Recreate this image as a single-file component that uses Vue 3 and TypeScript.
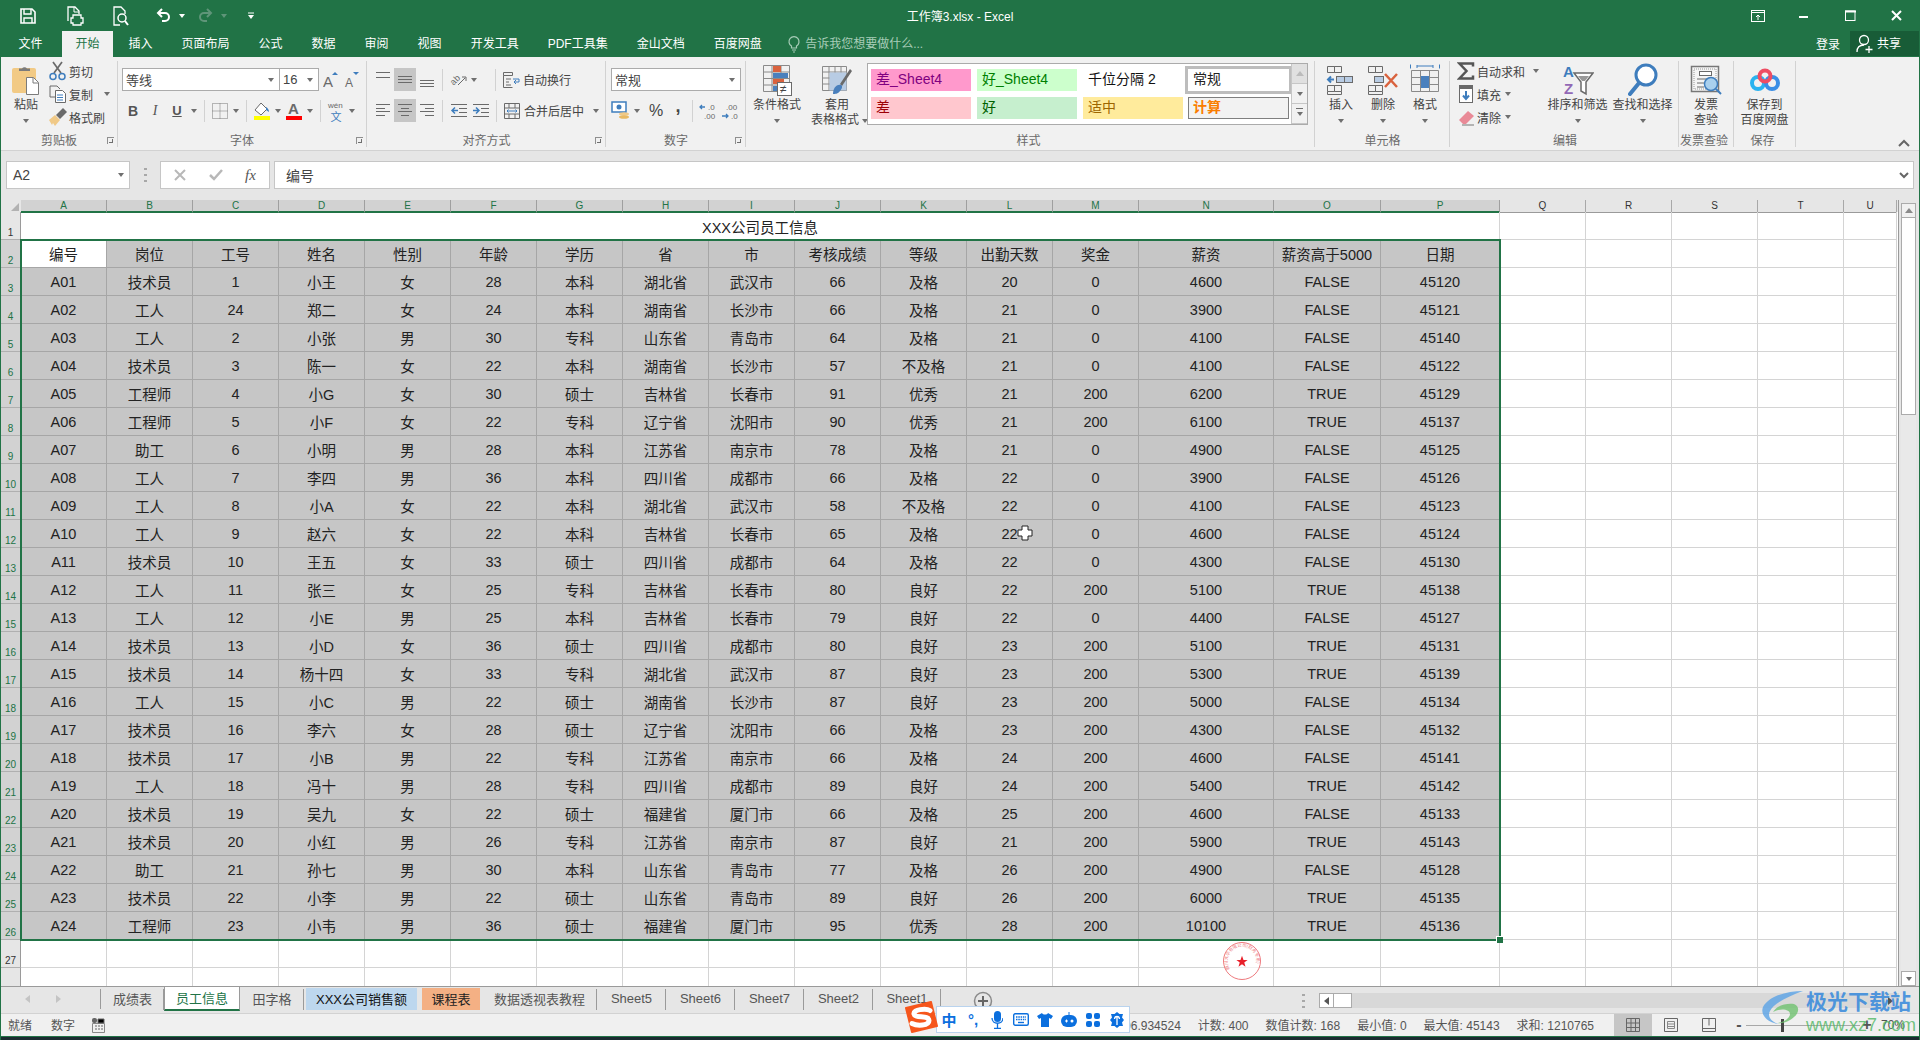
<template>
  <div class="app">
    <div class="titlebar">
      <div class="qat">
        <span class="qb q28"><Ico n="save" /></span>
        <span class="qb"><Ico n="printer" /></span>
        <span class="qb"><Ico n="preview" /></span>
        <span class="qb"><Ico n="undo" /></span><i class="tri tri-w"></i>
        <span class="qb q-redo"><Ico n="redo" /></span><i class="tri tri-dim"></i>
        <span class="qb q-more"><Ico n="more" /></span>
      </div>
      <div class="doc-title">工作簿3.xlsx - Excel</div>
      <div class="winbtns">
        <span class="wb"><Ico n="winopt" /></span>
        <span class="wb"><Ico n="winmin" /></span>
        <span class="wb"><Ico n="winmax" /></span>
        <span class="wb"><Ico n="winclose" /></span>
      </div>
    </div>

    <div class="tabrow">
      <span
        v-for="t in ribbonTabs"
        :key="t"
        class="rtab"
        :class="{ active: t === '开始', file: t === '文件' }"
      >{{ t }}</span>
      <span class="tellme"><Ico n="bulb" /><span>告诉我您想要做什么...</span></span>
      <span class="login">登录</span>
      <span class="share"><Ico n="person" /><span>共享</span></span>
    </div>

    <div class="ribbon">
      <section class="group g-clip">
        <div class="body row-body">
          <div class="big paste">
            <span class="big-ico"><Ico n="paste" /></span>
            <span>粘贴</span>
            <i class="tri big-tri"></i>
          </div>
          <div class="three clip-col">
            <div class="line"><span class="ic"><Ico n="cut" /></span>剪切</div>
            <div class="line"><span class="ic"><Ico n="copy" /></span>复制<i class="tri tri-copy"></i></div>
            <div class="line"><span class="ic"><Ico n="brush" /></span>格式刷</div>
          </div>
        </div>
        <div class="glabel">剪贴板<i class="launcher"></i></div>
      </section>

      <section class="group g-font">
        <div class="body two">
          <div class="line">
            <div class="combo font-name"><span>等线</span><i class="tri"></i></div>
            <div class="combo font-size"><span>16</span><i class="tri"></i></div>
            <span class="grow-a"><Ico n="growA" /></span>
            <span class="shrink-a"><Ico n="shrinkA" /></span>
          </div>
          <div class="line">
            <span class="ic bi b">B</span>
            <span class="ic bi i">I</span>
            <span class="ic bi u">U</span>
            <span class="cr"><i class="tri"></i></span>
            <i class="sep"></i>
            <span class="ic"><Ico n="borders" /></span>
            <span class="cr"><i class="tri"></i></span>
            <i class="sep"></i>
            <span class="ic"><Ico n="bucket" /></span>
            <span class="cr"><i class="tri"></i></span>
            <span class="ic"><Ico n="fontcolor" /></span>
            <span class="cr"><i class="tri"></i></span>
            <i class="sep"></i>
            <span class="ic"><Ico n="wen" /></span>
            <span class="cr"><i class="tri"></i></span>
          </div>
        </div>
        <div class="glabel">字体<i class="launcher"></i></div>
      </section>

      <section class="group g-align">
        <div class="body two">
          <div class="line">
            <span class="al"><Ico n="alTop" /></span>
            <span class="al on"><Ico n="alMid" /></span>
            <span class="al"><Ico n="alBot" /></span>
            <i class="sep"></i>
            <span class="ic"><Ico n="orient" /></span>
            <span class="cr"><i class="tri"></i></span>
            <i class="sep sep-far"></i>
            <span class="ic"><Ico n="wrap" /></span>
            <span class="lbl">自动换行</span>
          </div>
          <div class="line">
            <span class="al"><Ico n="alLeft" /></span>
            <span class="al on"><Ico n="alCenter" /></span>
            <span class="al"><Ico n="alRight" /></span>
            <i class="sep"></i>
            <span class="ic ic22"><Ico n="outdent" /></span>
            <span class="ic ic22"><Ico n="indent" /></span>
            <i class="sep"></i>
            <span class="ic"><Ico n="merge" /></span>
            <span class="lbl">合并后居中</span>
            <span class="cr merge-cr"><i class="tri"></i></span>
          </div>
        </div>
        <div class="glabel">对齐方式<i class="launcher"></i></div>
      </section>

      <section class="group g-num">
        <div class="body two">
          <div class="line">
            <div class="combo num-fmt"><span>常规</span><i class="tri"></i></div>
          </div>
          <div class="line">
            <span class="ic"><Ico n="money" /></span>
            <span class="cr"><i class="tri"></i></span>
            <span class="ic pct">%</span>
            <span class="ic comma">,</span>
            <i class="sep"></i>
            <span class="ic"><Ico n="decUp" /></span>
            <span class="ic dec2"><Ico n="decDown" /></span>
          </div>
        </div>
        <div class="glabel">数字<i class="launcher"></i></div>
      </section>

      <section class="group g-style">
        <div class="body row-body">
          <div class="big w60">
            <span class="big-ico"><Ico n="cond" /></span>
            <span>条件格式</span>
            <i class="tri big-tri"></i>
          </div>
          <div class="big w60">
            <span class="big-ico"><Ico n="tablefmt" /></span>
            <span>套用</span>
            <span class="with-tri">表格格式<i class="tri"></i></span>
          </div>
          <div class="gallery">
            <div class="gal-cells">
              <span class="gc c-bad4">差_Sheet4</span>
              <span class="gc c-good4">好_Sheet4</span>
              <span class="gc c-comma">千位分隔 2</span>
              <span class="gc c-normal">常规</span>
              <span class="gc c-bad">差</span>
              <span class="gc c-good">好</span>
              <span class="gc c-mid">适中</span>
              <span class="gc c-calc">计算</span>
            </div>
            <div class="gal-scroll">
              <span class="dis"><i class="tri-up"></i></span>
              <span><i class="tri"></i></span>
              <span><i class="tri tri-bar"></i></span>
            </div>
          </div>
        </div>
        <div class="glabel">样式</div>
      </section>

      <section class="group g-cells">
        <div class="body row-body">
          <div class="big w42">
            <span class="big-ico"><Ico n="insert" /></span>
            <span>插入</span>
            <i class="tri big-tri"></i>
          </div>
          <div class="big w42">
            <span class="big-ico"><Ico n="remove" /></span>
            <span>删除</span>
            <i class="tri big-tri"></i>
          </div>
          <div class="big w42">
            <span class="big-ico"><Ico n="format" /></span>
            <span>格式</span>
            <i class="tri big-tri"></i>
          </div>
        </div>
        <div class="glabel">单元格</div>
      </section>

      <section class="group g-edit">
        <div class="body row-body">
          <div class="three edit-col">
            <div class="line"><span class="ic"><Ico n="sigma" /></span>自动求和<i class="tri tri-sum"></i></div>
            <div class="line"><span class="ic"><Ico n="filldown" /></span>填充<i class="tri tri-near"></i></div>
            <div class="line"><span class="ic"><Ico n="eraser" /></span>清除<i class="tri tri-near"></i></div>
          </div>
          <div class="big w65">
            <span class="big-ico"><Ico n="sort" /></span>
            <span>排序和筛选</span>
            <i class="tri big-tri"></i>
          </div>
          <div class="big w65">
            <span class="big-ico"><Ico n="find" /></span>
            <span>查找和选择</span>
            <i class="tri big-tri"></i>
          </div>
        </div>
        <div class="glabel">编辑</div>
      </section>

      <section class="group g-inv">
        <div class="body row-body">
          <div class="big w54">
            <span class="big-ico"><Ico n="invoice" /></span>
            <span>发票</span>
            <span>查验</span>
          </div>
        </div>
        <div class="glabel">发票查验</div>
      </section>

      <section class="group g-save">
        <div class="body row-body">
          <div class="big w61">
            <span class="big-ico"><Ico n="baidu" /></span>
            <span>保存到</span>
            <span>百度网盘</span>
          </div>
        </div>
        <div class="glabel">保存</div>
      </section>

      <div class="collapse"><Ico n="chevUp" /></div>
    </div>

    <div class="formula">
      <div class="namebox"><span>A2</span><i class="tri"></i></div>
      <div class="fdots"><Ico n="dots" /></div>
      <div class="fbtns">
        <Ico n="fxCancel" />
        <Ico n="fxOk" />
        <span class="fx">fx</span>
      </div>
      <div class="finput"><span>编号</span><Ico n="chevDown" /></div>
    </div>

    <div class="sheet-wrap">
      <div class="sheet">
        <div class="srow head-row">
          <div class="corner"><Ico n="corner" /></div>
          <div v-for="(c, i) in columns" :key="c" class="chead" :class="{ sel: i < 16 }">{{ c }}</div>
        </div>

        <div class="srow h28">
          <div class="rhead">1</div>
          <div class="title-cell">XXX公司员工信息</div>
          <div v-for="c in 5" :key="c" class="cell"></div>
        </div>

        <div v-for="(r, ri) in rows" :key="ri" class="srow h28">
          <div class="rhead sel">{{ ri + 2 }}</div>
          <div
            v-for="(v, ci) in r"
            :key="ci"
            class="cell data"
            :class="{ active: ri === 0 && ci === 0 }"
          >{{ v }}</div>
          <div v-for="c in 5" :key="c" class="cell"></div>
        </div>

        <div class="srow h28">
          <div class="rhead">27</div>
          <div v-for="c in columns" :key="c" class="cell"></div>
        </div>
        <div class="srow h28">
          <div class="rhead"></div>
          <div v-for="c in columns" :key="c" class="cell"></div>
        </div>

        <div class="selection"><i class="handle"></i></div>
        <div class="cursor"><Ico n="cursor" /></div>
        <div class="stamp"><Ico n="stamp" /></div>
      </div>

      <div class="vscroll">
        <span class="vbtn up"><i class="tri-up"></i></span>
        <span class="vthumb"></span>
        <span class="vtrack"></span>
        <span class="vbtn"><i class="tri"></i></span>
      </div>
    </div>

    <div class="tabbar">
      <div class="tabnav"><i class="nav-l"></i><i class="nav-r"></i></div>
      <span
        v-for="t in sheetTabs"
        :key="t.name"
        class="stab"
        :class="t.cls"
        :style="{ width: t.w + 'px' }"
      >{{ t.name }}</span>
      <span class="addsheet"><Ico n="plus" /></span>
      <span class="hdots"><Ico n="dots" /></span>
      <div class="hscroll">
        <span class="hbtn"><i class="nav-l dark"></i></span>
        <span class="hthumb"></span>
        <span class="htrack"><i class="nav-r dark"></i></span>
      </div>
    </div>

    <div class="statusbar">
      <span class="st-left">就绪</span>
      <span class="st-left">数字</span>
      <span class="macro"><Ico n="macro" /></span>
      <div class="st-fill"></div>
      <span v-for="s in stats" :key="s" class="stat">{{ s }}</span>
      <div class="views">
        <span class="vw on"><Ico n="vNormal" /></span>
        <span class="vw"><Ico n="vPage" /></span>
        <span class="vw"><Ico n="vBreak" /></span>
      </div>
      <div class="zoomer">
        <span class="zm">-</span>
        <span class="slider"><i></i></span>
        <span class="zm">+</span>
        <span class="zpct">70%</span>
      </div>
    </div>
    <div class="taskbar"></div>

    <div class="ime">
      <div class="ime-logo"><Ico n="sogou" /></div>
      <div class="ime-bar">
        <span class="ime-zh">中</span>
        <span class="ime-punc">°,</span>
        <span class="ime-i"><Ico n="mic" /></span>
        <span class="ime-i"><Ico n="kbd" /></span>
        <span class="ime-i"><Ico n="shirt" /></span>
        <span class="ime-i"><Ico n="robot" /></span>
        <span class="ime-i"><Ico n="apps" /></span>
        <span class="ime-i"><Ico n="gear" /></span>
      </div>
    </div>

    <div class="watermark">
      <Ico n="swirl" />
      <div class="wm-text">
        <span class="wm-cn">极光下载站</span>
        <span class="wm-url">www.xz7.com</span>
      </div>
    </div>
  </div>
</template>

<script setup lang="ts">
import { h } from 'vue'

const G = '#6a6a6a'
const B = '#3e7dbd'
const L = 'fill="none" stroke="#6a6a6a"'

// [width, height, svg markup]
const icons: Record<string, [number, number, string]> = {
  save: [18, 18, '<path d="M2 2h11l3 3v11H2z" fill="none" stroke="#fff" stroke-width="1.6"/><path d="M5 2v5h7V2M5 16v-5h8v5" fill="none" stroke="#fff" stroke-width="1.4"/>'],
  printer: [18, 20, '<path d="M2 15V1h7l4 4v3" fill="none" stroke="#fff" stroke-width="1.3"/><path d="M8 1v5h5" fill="none" stroke="#fff"/><path d="M7 9h8v3h2v5h-2v2H7v-2H5v-5h2z" fill="none" stroke="#fff" stroke-width="1.3"/>'],
  preview: [18, 20, '<path d="M8 19H2V1h7l4 4v3" fill="none" stroke="#fff" stroke-width="1.3"/><circle cx="10" cy="12" r="4" fill="none" stroke="#fff" stroke-width="1.5"/><path d="M13 15l3 4" stroke="#fff" stroke-width="2"/>'],
  undo: [16, 16, '<path d="M4 5h6a4 4 0 0 1 0 8H7" fill="none" stroke="#fff" stroke-width="2"/><path d="M7 1L3 5l4 4" fill="none" stroke="#fff" stroke-width="2"/>'],
  redo: [16, 16, '<path d="M12 5H6a4 4 0 0 0 0 8h3" fill="none" stroke="#5f9579" stroke-width="2"/><path d="M9 1l4 4-4 4" fill="none" stroke="#5f9579" stroke-width="2"/>'],
  more: [8, 8, '<path d="M1 1h6" stroke="#fff"/><path d="M1 3h6L4 7z" fill="#fff"/>'],
  winopt: [14, 12, '<rect x=".5" y=".5" width="13" height="11" fill="none" stroke="#fff"/><path d="M1 2.5h12" stroke="#fff"/><path d="M7 10V5M5 7l2-2 2 2" fill="none" stroke="#fff"/>'],
  winmin: [10, 10, '<path d="M0 6h9" stroke="#fff" stroke-width="2"/>'],
  winmax: [11, 11, '<rect x=".5" y="1" width="9.5" height="9.5" fill="none" stroke="#fff"/><path d="M0 1.5h11" stroke="#fff" stroke-width="2"/>'],
  winclose: [11, 11, '<path d="M1 1l9 9M10 1l-9 9" stroke="#fff" stroke-width="2"/>'],
  bulb: [12, 18, '<path d="M3.5 11a5 5 0 1 1 5 0v2h-5z" fill="none" stroke="#a8cdb8" stroke-width="1.2"/><path d="M4 15h4M5 17h2" stroke="#a8cdb8"/>'],
  person: [18, 20, '<circle cx="8" cy="6" r="4.5" fill="none" stroke="#fff" stroke-width="1.3"/><path d="M1 18c0-5 3-7 7-7" fill="none" stroke="#fff" stroke-width="1.3"/><path d="M13 12v7M9.5 15.5h7" stroke="#fff" stroke-width="1.3"/>'],
  paste: [28, 30, '<rect x="0" y="3" width="24" height="25" rx="2" fill="#f2ca85"/><path d="M7 6V3.5h3a3 3 0 0 1 5 0h3V6z" fill="#7b7b7b"/><path d="M14.5 12.5h7l5 5v12h-12z" fill="#fff" stroke="#7b7b7b"/><path d="M21 13v5h5" fill="none" stroke="#7b7b7b"/>'],
  cut: [20, 20, `<path d="M6 12L14 1M13 12L5 1" stroke="${G}" stroke-width="1.7"/><circle cx="5" cy="15.5" r="3" fill="none" stroke="${B}" stroke-width="1.5"/><circle cx="14" cy="15.5" r="3" fill="none" stroke="${B}" stroke-width="1.5"/>`],
  copy: [18, 18, `<path d="M6 12H1V1h7l3 3" ${L}/><path d="M6.5 5.5h7l3 3v9h-10z" fill="#fff" stroke="${G}"/><path d="M8 10h6M8 12.5h6M8 15h6" stroke="${B}"/>`],
  brush: [20, 20, `<path d="M1 13l6-5 5 5-5 6-2-3-1 2z" fill="#f0c987"/><path d="M8 8l7-7 4 4-7 7z" fill="${G}"/>`],
  growA: [16, 18, `<text x="0" y="16" font-size="15" fill="${G}" font-family="Liberation Sans">A</text><path d="M9 4l3-3 3 3z" fill="${B}"/>`],
  shrinkA: [16, 18, `<text x="1" y="16" font-size="12" fill="${G}" font-family="Liberation Sans">A</text><path d="M9 1h6l-3 3z" fill="${B}"/>`],
  borders: [16, 16, '<path d="M.5.5h15v15H.5zM8 .5v15M.5 8h15" fill="none" stroke="#777" stroke-dasharray="1 1"/>'],
  bucket: [18, 20, `<path d="M2 9l6-7 6 6-6 6z" fill="#fff" stroke="${G}"/><path d="M13 6c2 1 3 3 3 5l-3-2z" fill="${B}"/><rect x="1" y="15" width="16" height="4" fill="#ffff00"/>`],
  fontcolor: [16, 20, `<text x="2" y="13" font-size="15" font-weight="700" fill="${G}" font-family="Liberation Sans">A</text><rect x="0" y="15" width="16" height="4" fill="#ff0000"/>`],
  wen: [18, 22, `<text x="1" y="8" font-size="8" fill="${G}" font-family="Liberation Sans">wén</text><text x="3.5" y="20.5" font-size="11" fill="${B}" font-family="Noto Sans CJK SC">文</text>`],
  alTop: [16, 23, `<path d="M1 4.5h14M1 9.5h14" ${L}/>`],
  alMid: [16, 23, `<path d="M1 8.5h14M1 11.5h14M1 14.5h14" ${L}/>`],
  alBot: [16, 23, `<path d="M1 12.5h14M1 15.5h14M1 18.5h14" ${L}/>`],
  alLeft: [16, 23, `<path d="M1 5.5h14M1 9.5h9M1 12.5h14M1 16.5h9" ${L}/>`],
  alCenter: [16, 23, `<path d="M1 5.5h14M4 9.5h8M1 12.5h14M4 16.5h8" ${L}/>`],
  alRight: [16, 23, `<path d="M1 5.5h14M6 9.5h9M1 12.5h14M6 16.5h9" ${L}/>`],
  orient: [18, 18, `<text x="1" y="12" font-size="9" transform="rotate(-45 6 9)" fill="${G}" font-family="Liberation Sans">ab</text><path d="M9 14L16 7M13 6h4v4" ${L}/>`],
  wrap: [18, 18, `<path d="M1.5 1.5h9v3h-9zM1.5 4.5v12h9M4 8h5M4 11h3M4 14h5" ${L}/><path d="M11 8h6M17 8v3h-5M14 9l-2 2 2 2" fill="none" stroke="${B}"/>`],
  merge: [18, 18, `<path d="M1.5 1.5h15v15h-15zM1.5 6h15M1.5 12h15M6 1.5V6M12 1.5V6M6 12v4.5M12 12v4.5" ${L}/><path d="M4 9h10M5.5 7.5L4 9l1.5 1.5M12.5 7.5L14 9l-1.5 1.5" fill="none" stroke="${B}"/>`],
  outdent: [18, 16, `<path d="M1 1.5h16M9 5.5h8M9 9.5h8M1 13.5h16" ${L}/><path d="M8 7.5H2M5 4.5l-3 3 3 3" fill="none" stroke="${B}" stroke-width="1.5"/>`],
  indent: [18, 16, `<path d="M1 1.5h16M9 5.5h8M9 9.5h8M1 13.5h16" ${L}/><path d="M1 7.5h6M4 4.5l3 3-3 3" fill="none" stroke="${B}" stroke-width="1.5"/>`],
  money: [20, 20, `<rect x="1" y="1" width="14" height="10" fill="#fff" stroke="${B}" stroke-width="1.5"/><circle cx="8" cy="6" r="2.5" fill="${B}"/><ellipse cx="13" cy="13" rx="5" ry="1.8" fill="#f0c987"/><ellipse cx="13" cy="16" rx="5" ry="1.8" fill="#e8b964"/>`],
  decUp: [20, 18, `<path d="M7 5H2M4 3L2 5l2 2" fill="none" stroke="${B}" stroke-width="1.3"/><text x="10" y="8" font-size="8" fill="${G}" font-family="Liberation Sans">.0</text><text x="6" y="17" font-size="8" fill="${G}" font-family="Liberation Sans">.00</text>`],
  decDown: [20, 18, `<text x="6" y="8" font-size="8" fill="${G}" font-family="Liberation Sans">.00</text><path d="M2 14h6M6 12l2 2-2 2" fill="none" stroke="${B}" stroke-width="1.3"/><text x="11" y="17" font-size="8" fill="${G}" font-family="Liberation Sans">.0</text>`],
  cond: [30, 32, '<path d="M1.5 1.5h26v26h-26zM10 1.5v26M19 1.5v26M1.5 8h26M1.5 14.5h26M1.5 21h26" fill="none" stroke="#8a8a8a"/><rect x="11" y="2" width="8" height="6" fill="#d9623e"/><rect x="11" y="9" width="15" height="5" fill="#4a80bd"/><rect x="11" y="15" width="11" height="5" fill="#d9623e"/><rect x="11" y="22" width="6" height="5" fill="#4a80bd"/><rect x="15.5" y="18.5" width="14" height="13" fill="#fff" stroke="#6a6a6a"/><text x="18" y="29" font-size="12" fill="#444" font-family="Liberation Sans">≠</text>'],
  tablefmt: [32, 32, '<path d="M1.5 2.5h24v24h-24zM1.5 8h24M1.5 14h24M1.5 20h24M8 2.5v24M14 2.5v24M20 2.5v24" fill="none" stroke="#8a8a8a"/><rect x="8.5" y="8.5" width="17" height="18" fill="#b8cce4"/><path d="M19 20L29 5l2 2-10 15z" fill="#6a6a6a"/><path d="M12 30c0-5 3-10 8-9 2 1 1 4-1 6-2 3-5 3-7 3z" fill="#4a80bd"/>'],
  insert: [30, 30, `<path d="M1.5 1.5h7v6h-7zM8.5 1.5h7v6h-7zM1.5 20.5h7v6h-7zM8.5 20.5h7v6h-7zM1.5 26.5v3h14v-3" fill="none" stroke="#6a6a6a"/><rect x="10.5" y="11.5" width="8" height="6" fill="#b8cce4" stroke="#6a6a6a"/><rect x="18.5" y="11.5" width="8" height="6" fill="#b8cce4" stroke="#6a6a6a"/><path d="M8 14.5H2M5 11.5l-3 3 3 3" fill="none" stroke="${B}" stroke-width="2"/>`],
  remove: [32, 30, `<path d="M1.5 1.5h7v6h-7zM8.5 1.5h7v6h-7zM1.5 20.5h7v6h-7zM8.5 20.5h7v6h-7zM1.5 26.5v3h14v-3" fill="none" stroke="#6a6a6a"/><rect x="7.5" y="11.5" width="9" height="6" fill="#b8cce4" stroke="#6a6a6a"/><path d="M18 9l12 13M30 9L18 22" stroke="#d9623e" stroke-width="2.5"/>`],
  format: [30, 32, `<path d="M7 2h16M7 1v3M23 1v3" fill="none" stroke="${B}"/><path d="M.5.5v4M29.5.5v4" stroke="${B}"/><path d="M1.5 6.5h27v21h-27zM1.5 13.5h27M1.5 20.5h27M10.5 6.5v21M19.5 6.5v21" fill="none" stroke="#8a8a8a"/><rect x="11" y="12" width="8" height="12" fill="#4a80bd"/>`],
  sigma: [18, 18, '<path d="M16 4.5V1.5H2.5l7 7.5-7 7.5H16v-3" fill="none" stroke="#555" stroke-width="2.5"/>'],
  filldown: [14, 18, `<rect x=".5" y=".5" width="13" height="17" fill="#fff" stroke="${G}"/><rect x="0" y="0" width="14" height="4" fill="${G}"/><path d="M7 6v8M4 10.5L7 14l3-3.5" fill="none" stroke="${B}" stroke-width="2"/>`],
  eraser: [18, 18, '<path d="M2 12l9-9 6 5-8 8H6z" fill="#e98a97"/><path d="M5 17h12" stroke="#777"/>'],
  sort: [32, 32, `<text x="1" y="13" font-size="15" font-weight="700" fill="${B}" font-family="Liberation Sans">A</text><text x="2" y="30" font-size="15" font-weight="700" fill="#9268b5" font-family="Liberation Sans">Z</text><path d="M12 9h19l-7 9v12l-5-3v-9z" fill="#fff" stroke="${G}" stroke-width="1.5"/><path d="M16 12h11l-4 5h-3z" fill="#999"/>`],
  find: [30, 34, `<circle cx="18" cy="12" r="10" fill="#fff" stroke="${B}" stroke-width="3"/><path d="M11 20L2 31" stroke="${B}" stroke-width="4" stroke-linecap="round"/>`],
  invoice: [32, 30, `<path d="M1.5 1.5h27v25h-27z" fill="#f5f5f5" stroke="#777" stroke-width="1.5"/><path d="M4 4h22v20H4z" fill="none" stroke="#999" stroke-dasharray="1 1"/><rect x="9.5" y="6.5" width="12" height="4" fill="#fff" stroke="${G}"/><path d="M7 14h10M7 18h7M7 22h7" ${L}/><circle cx="21" cy="19" r="6.5" fill="#a9d0ee" stroke="${B}" stroke-width="1.5"/><path d="M26 24l5 5" stroke="${B}" stroke-width="2"/>`],
  baidu: [30, 24, '<circle cx="8" cy="15" r="6" fill="none" stroke="#2ab3f0" stroke-width="4"/><circle cx="22" cy="15" r="6" fill="none" stroke="#3a8ee6" stroke-width="4"/><circle cx="15" cy="8" r="5.5" fill="none" stroke="#ee4d63" stroke-width="4"/>'],
  chevUp: [12, 8, '<path d="M1 7l5-5 5 5" fill="none" stroke="#666" stroke-width="2"/>'],
  chevDown: [10, 7, '<path d="M1 1l4 4 4-4" fill="none" stroke="#666" stroke-width="2"/>'],
  dots: [3, 14, '<path d="M0 1h3M0 7h3M0 13h3" stroke="#a8a8a8" stroke-width="2"/>'],
  fxCancel: [12, 12, '<path d="M1 1l10 10M11 1L1 11" stroke="#b8b8b8" stroke-width="2"/>'],
  fxOk: [14, 12, '<path d="M1 6l4 4 8-9" fill="none" stroke="#b8b8b8" stroke-width="2.5"/>'],
  corner: [8, 8, '<path d="M8 0v8H0z" fill="#b2b2b2"/>'],
  cursor: [16, 16, '<path d="M5 1h6v4h4v6h-4v4H5v-4H1V5h4z" fill="#fff" stroke="#222"/>'],
  stamp: [40, 40, '<defs><path id="stamp-arc" d="M8 28a14.4 14.4 0 1 1 24 0"/></defs><circle cx="20" cy="20" r="18.5" fill="#fff" fill-opacity=".6" stroke="#ee7a7e" stroke-width="1"/><text font-size="4.4" fill="#ee7a7e" font-family="Noto Sans CJK SC"><textPath href="#stamp-arc">四川大华有限公司(财务专用)</textPath></text><path transform="translate(5 5) scale(.75)" d="M20 13l2 5.5h5.5l-4.500 3.500 1.700 5.500-4.700-3.300-4.700 3.300 1.700-5.500-4.500-3.500H18z" fill="#e8202a"/>'],
  plus: [20, 20, '<circle cx="10" cy="10" r="8.5" fill="none" stroke="#8a8a8a" stroke-width="1.5"/><path d="M10 5v10M5 10h10" stroke="#666" stroke-width="2"/>'],
  macro: [13, 15, '<rect x="0" y="0" width="5" height="5" rx="2" fill="#666"/><path d="M.5 5.5h12v9H.5z" fill="none" stroke="#888"/><path d="M6 1h6v4H6zM3 8h2M6 8h2M9 8h2M3 11h2M6 11h2M9 11h2" stroke="#666"/>'],
  vNormal: [14, 14, '<path d="M.5.5h13v13H.5zM5 .5v13M9.5.5v13M.5 5h13M.5 9.5h13" fill="none" stroke="#666"/>'],
  vPage: [14, 14, '<path d="M.5.5h13v13H.5z" fill="none" stroke="#666"/><path d="M3.5 3.5h7v7h-7zM3.5 6h7M3.5 8.5h7" fill="none" stroke="#888"/>'],
  vBreak: [14, 14, '<path d="M.5.5h13v13H.5zM.5 10.5h13M7 .5v7" fill="none" stroke="#666"/>'],
  sogou: [34, 32, '<path d="M2 7l25-6 6 24-25 6z" fill="#f6561c" stroke="#f6561c" stroke-width="2" stroke-linejoin="round"/><path d="M26 9.500c-4-2.500-17-1-16 3.500s15 1 15 6.500-12 5.500-17 3" fill="none" stroke="#fff" stroke-width="5" stroke-linecap="round"/>'],
  mic: [12, 18, '<rect x="3" y="0" width="7" height="11" rx="3.5" fill="#0b6fde"/><path d="M1 7c0 7 11 7 11 0M6.5 13v4M3 17.5h7" fill="none" stroke="#0b6fde" stroke-width="1.3"/>'],
  kbd: [16, 13, '<rect x=".7" y=".7" width="14.6" height="11.6" rx="1.5" fill="none" stroke="#0b6fde" stroke-width="1.4"/><path d="M3 4h10M3 6.5h10" stroke="#0b6fde" stroke-width="1.5" stroke-dasharray="1.5 .8"/><path d="M5 9.5h6" stroke="#0b6fde" stroke-width="1.4"/>'],
  shirt: [16, 14, '<path d="M5 0L0 3l2 3 2-1v9h8V5l2 1 2-3-5-3c-1 2-5 2-6 0z" fill="#0b6fde"/>'],
  robot: [16, 15, '<path d="M8 0v3" stroke="#0b6fde"/><rect x="0" y="3" width="16" height="12" rx="6" fill="#0b6fde"/><path d="M4 9h3M5.500 7.500v3" stroke="#fff"/><circle cx="11" cy="9" r="1.500" fill="#fff"/>'],
  apps: [14, 14, '<rect width="6" height="6" rx="2" fill="#0b6fde"/><rect x="8" width="6" height="6" rx="2" fill="#0b6fde"/><rect y="8" width="6" height="6" rx="2" fill="#0b6fde"/><rect x="8" y="8" width="6" height="6" rx="2" fill="#0b6fde"/>'],
  gear: [14, 16, '<path d="M7 0l2.500 2H13l-1 3.500L14 8l-2 2.500 1 3.500H9.500L7 16l-2.500-2H1l1-3.500L0 8l2-2.500L1 2h3.500z" fill="#0b6fde"/><path d="M7 5v8M4.500 7a2.500 2.500 0 0 1 5 0" fill="none" stroke="#fff" stroke-width="1.300"/>'],
  swirl: [44, 36, '<path d="M42 1C26 1 8 6 2 17c-3 7 4 16 16 17-8-2-12-8-9-13C13 13 28 6 42 1z" fill="#5aa3e6" opacity=".8"/><path d="M12 22c4-7 14-9 21-8 6 2 5 9 0 13-4 4-12 7-16 6 6-1 12-5 12-9 0-5-10-6-17-2z" fill="#6fc26f" opacity=".8"/>']
}

const Ico = (p: { n: string }) => {
  const [w, hh, inner] = icons[p.n]
  return h('svg', { width: w, height: hh, viewBox: `0 0 ${w} ${hh}`, innerHTML: inner })
}

const ribbonTabs = ['文件', '开始', '插入', '页面布局', '公式', '数据', '审阅', '视图', '开发工具', 'PDF工具集', '金山文档', '百度网盘']

const columns = 'ABCDEFGHIJKLMNOPQRSTU'.split('')

const table = `编号 岗位 工号 姓名 性别 年龄 学历 省 市 考核成绩 等级 出勤天数 奖金 薪资 薪资高于5000 日期
A01 技术员 1 小王 女 28 本科 湖北省 武汉市 66 及格 20 0 4600 FALSE 45120
A02 工人 24 郑二 女 24 本科 湖南省 长沙市 66 及格 21 0 3900 FALSE 45121
A03 工人 2 小张 男 30 专科 山东省 青岛市 64 及格 21 0 4100 FALSE 45140
A04 技术员 3 陈一 女 22 本科 湖南省 长沙市 57 不及格 21 0 4100 FALSE 45122
A05 工程师 4 小G 女 30 硕士 吉林省 长春市 91 优秀 21 200 6200 TRUE 45129
A06 工程师 5 小F 女 22 专科 辽宁省 沈阳市 90 优秀 21 200 6100 TRUE 45137
A07 助工 6 小明 男 28 本科 江苏省 南京市 78 及格 21 0 4900 FALSE 45125
A08 工人 7 李四 男 36 本科 四川省 成都市 66 及格 22 0 3900 FALSE 45126
A09 工人 8 小A 女 22 本科 湖北省 武汉市 58 不及格 22 0 4100 FALSE 45123
A10 工人 9 赵六 女 22 本科 吉林省 长春市 65 及格 22 0 4600 FALSE 45124
A11 技术员 10 王五 女 33 硕士 四川省 成都市 64 及格 22 0 4300 FALSE 45130
A12 工人 11 张三 女 25 专科 吉林省 长春市 80 良好 22 200 5100 TRUE 45138
A13 工人 12 小E 男 25 本科 吉林省 长春市 79 良好 22 0 4400 FALSE 45127
A14 技术员 13 小D 女 36 硕士 四川省 成都市 80 良好 23 200 5100 TRUE 45131
A15 技术员 14 杨十四 女 33 专科 湖北省 武汉市 87 良好 23 200 5300 TRUE 45139
A16 工人 15 小C 男 22 硕士 湖南省 长沙市 87 良好 23 200 5000 FALSE 45134
A17 技术员 16 李六 女 28 硕士 辽宁省 沈阳市 66 及格 23 200 4300 FALSE 45132
A18 技术员 17 小B 男 22 专科 江苏省 南京市 66 及格 24 200 4600 FALSE 45141
A19 工人 18 冯十 男 28 专科 四川省 成都市 89 良好 24 200 5400 TRUE 45142
A20 技术员 19 吴九 女 22 硕士 福建省 厦门市 66 及格 25 200 4600 FALSE 45133
A21 技术员 20 小红 男 26 专科 江苏省 南京市 87 良好 21 200 5900 TRUE 45143
A22 助工 21 孙七 男 30 本科 山东省 青岛市 77 及格 26 200 4900 FALSE 45128
A23 技术员 22 小李 男 22 硕士 山东省 青岛市 89 良好 26 200 6000 TRUE 45135
A24 工程师 23 小韦 男 36 硕士 福建省 厦门市 95 优秀 28 200 10100 TRUE 45136`

const rows = table.split('\n').map((l) => l.split(' '))

const sheetTabs = [
  { name: '成绩表', w: 63, cls: '' },
  { name: '员工信息', w: 76, cls: 'cur' },
  { name: '田字格', w: 64, cls: '' },
  { name: 'XXX公司销售额', w: 111, cls: 'blue' },
  { name: '课程表', w: 58, cls: 'orange' },
  { name: '数据透视表教程', w: 115, cls: 'first-after' },
  { name: 'Sheet5', w: 69, cls: '' },
  { name: 'Sheet6', w: 69, cls: '' },
  { name: 'Sheet7', w: 69, cls: '' },
  { name: 'Sheet2', w: 69, cls: '' },
  { name: 'Sheet1', w: 68, cls: '' }
]

const stats = ['平均值: 7206.934524', '计数: 400', '数值计数: 168', '最小值: 0', '最大值: 45143', '求和: 1210765']
</script>

<style>
html,
body {
  margin: 0;
  background: #fff;
}
</style>

<style scoped>
.app {
  position: relative;
  width: 1920px;
  height: 1040px;
  box-sizing: border-box;
  border-left: 1px solid #217346;
  border-right: 1px solid #217346;
  overflow: hidden;
  display: flex;
  flex-direction: column;
  background: #e6e6e6;
  font-family: "Liberation Sans", "Noto Sans CJK SC", sans-serif;
  font-size: 12px;
  color: #444;
}
svg {
  display: block;
  flex: none;
}
i {
  display: block;
  font-style: normal;
}

/* small triangles used as dropdown carets */
.tri {
  width: 0;
  height: 0;
  flex: none;
  border-left: 3.5px solid transparent;
  border-right: 3.5px solid transparent;
  border-top: 4px solid #6f6f6f;
}
.tri-up {
  width: 0;
  height: 0;
  border-left: 4px solid transparent;
  border-right: 4px solid transparent;
  border-bottom: 5px solid #8a8a8a;
}
.tri-w {
  border-top-color: #fff;
  margin: 0 13.5px 0 7.5px;
}
.tri-dim {
  border-top-color: #5f9579;
  margin: 0 20.5px 0 6.5px;
}

/* title bar */
.titlebar {
  height: 31px;
  flex: none;
  background: #217346;
  color: #fff;
  display: grid;
  grid-template-columns: 1fr auto 1fr;
  align-items: center;
}
.qat {
  display: flex;
  align-items: center;
  height: 26px;
  padding-left: 18px;
}
.qb {
  width: 46px;
  flex: none;
  display: flex;
  justify-content: flex-start;
}
.q28 {
  width: 47px;
}
.qb:nth-child(3) {
  width: 43px;
}
.qb:nth-child(4) {
  width: 16px;
}
.q-redo {
  width: 16px;
}
.q-more {
  width: 8px;
}
.doc-title {
  font-size: 12px;
}
.winbtns {
  display: flex;
  justify-content: flex-end;
  height: 26px;
}
.wb {
  width: 46px;
  display: flex;
  align-items: center;
  justify-content: center;
}

/* ribbon tabs */
.tabrow {
  height: 26px;
  flex: none;
  background: #217346;
  color: #fff;
  display: flex;
  align-items: stretch;
  padding-left: 3px;
  line-height: 26px;
}
.rtab {
  padding: 0 14.5px;
}
.rtab.file {
  margin-right: 5px;
}
.rtab.active {
  background: #f1f1f1;
  color: #217346;
  padding: 0 13.5px;
  margin-right: 1px;
}
.tellme {
  display: flex;
  align-items: center;
  gap: 5px;
  margin-left: 12px;
  color: #a8cdb8;
}
.login {
  margin-left: auto;
  width: 34px;
  text-align: center;
  margin-right: 5px;
  margin-top: 1px;
}
.share {
  width: 69px;
  margin-bottom: 1px;
  background: #185c37;
  display: flex;
  align-items: center;
  gap: 3px;
  padding-left: 6px;
  box-sizing: border-box;
}

/* ribbon */
.ribbon {
  position: relative;
  height: 94px;
  flex: none;
  box-sizing: border-box;
  background: #f1f1f1;
  border-bottom: 1px solid #d2d2d2;
  padding-top: 4px;
  display: flex;
  align-items: flex-start;
}
.group {
  height: 86px;
  box-sizing: border-box;
  border-right: 1px solid #d2d2d2;
  display: flex;
  flex-direction: column;
  position: relative;
}
.g-clip { width: 117px; padding-left: 4px; }
.g-font { width: 249px; padding-left: 4px; }
.g-align { width: 239px; padding-left: 5px; }
.g-num { width: 140px; padding-left: 5px; }
.g-style { width: 569px; padding-left: 1px; }
.g-cells { width: 135px; padding-left: 5px; }
.g-edit { width: 229px; padding-left: 6px; }
.g-inv { width: 55px; }
.g-save { width: 62px; }
.body {
  height: 72px;
  flex: none;
}
.row-body {
  display: flex;
}
.two {
  display: flex;
  flex-direction: column;
  gap: 8px;
  padding-top: 7px;
  box-sizing: border-box;
}
.two .line {
  height: 23px;
}
.line {
  display: flex;
  align-items: center;
  white-space: nowrap;
}
.three {
  display: flex;
  flex-direction: column;
  gap: 3px;
}
.three .line {
  height: 20px;
}
.clip-col {
  margin-left: 1px;
}
.edit-col {
  width: 89px;
  flex: none;
}
.glabel {
  height: 14px;
  line-height: 14px;
  padding-top: 1px;
  text-align: center;
  color: #6a6a6a;
  white-space: nowrap;
  margin-left: -4px;
}
.launcher {
  position: absolute;
  right: 3px;
  bottom: 3px;
  width: 6px;
  height: 6px;
  border: 1px solid #8f8f8f;
  border-width: 1px 0 0 1px;
}
.launcher::after {
  content: "";
  display: block;
  width: 3px;
  height: 3px;
  margin: 1px;
  border: 1px solid #6f6f6f;
  border-width: 0 1px 1px 0;
}
.big {
  display: flex;
  flex-direction: column;
  align-items: center;
  flex: none;
  line-height: 15px;
  white-space: nowrap;
}
.big-ico {
  height: 37px;
  display: flex;
  align-items: center;
  justify-content: center;
}
.big-tri {
  margin-top: 6px;
}
.paste { width: 42px; }
.w42 { width: 42px; }
.w54 { width: 54px; }
.w60 { width: 60px; }
.w61 { width: 61px; }
.w65 { width: 65px; }
.with-tri {
  display: flex;
  align-items: center;
  gap: 3px;
  padding-left: 5px;
}
.ic {
  width: 20px;
  height: 22px;
  flex: none;
  display: flex;
  align-items: center;
  justify-content: center;
}
.ic22 {
  width: 22px;
}
.three .ic {
  margin-right: 1px;
}
.cr {
  width: 12px;
  flex: none;
  display: flex;
  justify-content: center;
}
.sep {
  width: 1px;
  height: 22px;
  flex: none;
  margin: 0 5px 0 4px;
  background: #d2d2d2;
}
.sep-far {
  margin-left: 15px;
}
.tri-copy {
  margin-left: 11px;
}
.tri-sum {
  margin-left: 8px;
}
.tri-near {
  margin-left: 4px;
}
.merge-cr {
  margin-left: 6px;
}
.lbl {
  margin-left: 2px;
}
.bi {
  font-size: 13px;
  color: #555;
  width: 22px;
}
.b { font-weight: 700; font-size: 14px; }
.i { font-style: italic; font-family: "Liberation Serif", serif; font-size: 14px; }
.u { text-decoration: underline; font-weight: 700; }
.combo {
  height: 23px;
  box-sizing: border-box;
  background: #fff;
  border: 1px solid #ababab;
  display: flex;
  align-items: center;
  justify-content: space-between;
  padding: 0 5px 0 3px;
  font-size: 13px;
}
.font-name { width: 157px; border-right: 0; }
.font-size { width: 40px; }
.num-fmt { width: 130px; }
.grow-a { margin-left: 4px; }
.shrink-a { margin-left: 5px; }
.al {
  width: 22px;
  height: 23px;
  flex: none;
  display: flex;
  justify-content: center;
}
.al.on {
  background: #c6c6c6;
}
.pct {
  font-size: 16px;
  margin-left: 3px;
}
.comma {
  font-size: 18px;
  font-weight: 700;
  margin-left: 2px;
  padding-bottom: 8px;
  box-sizing: border-box;
}
.dec2 {
  margin-left: 2px;
}

/* style gallery */
.gallery {
  width: 441px;
  height: 62px;
  margin-top: 2px;
  box-sizing: border-box;
  border: 1px solid #ababab;
  background: #fff;
  display: flex;
  justify-content: space-between;
}
.gal-cells {
  display: grid;
  grid-template-columns: repeat(4, 100px);
  grid-auto-rows: 22px;
  column-gap: 6px;
  row-gap: 6px;
  padding: 5px 0 0 3px;
}
.gc {
  padding-left: 5px;
  line-height: 21px;
  font-size: 14px;
  box-sizing: border-box;
  white-space: nowrap;
}
.c-bad4 { background: #ff99cc; color: #800080; }
.c-good4 { background: #ccffcc; color: #008000; }
.c-comma { color: #111; }
.c-normal { color: #222; outline: 3px solid #bdbdbd; margin-left: -1px; }
.c-bad { background: #ffc7ce; color: #9c0006; }
.c-good { background: #c6efce; color: #006100; }
.c-mid { background: #ffeb9c; color: #9c6500; }
.c-calc { background: #f2f2f2; color: #fa7d00; border: 1px solid #7f7f7f; line-height: 19px; font-weight: 700; padding-left: 4px; margin-left: -1px; }
.gal-scroll {
  width: 15px;
  display: flex;
  flex-direction: column;
  border-left: 1px solid #c6c6c6;
  background: #f1f1f1;
}
.gal-scroll span {
  flex: 1;
  display: flex;
  align-items: center;
  justify-content: center;
  border-bottom: 1px solid #c6c6c6;
}
.gal-scroll .dis {
  background: #e0e0e0;
}
.gal-scroll .dis .tri-up {
  border-bottom-color: #bbb;
}
.tri-bar {
  position: relative;
}
.tri-bar::before {
  content: "";
  position: absolute;
  left: -3.5px;
  top: -8px;
  width: 7px;
  height: 1px;
  background: #6f6f6f;
}
.collapse {
  position: absolute;
  right: 9px;
  top: 82px;
}

/* formula bar */
.formula {
  height: 49px;
  flex: none;
  box-sizing: border-box;
  padding-top: 10px;
  padding-left: 5px;
  display: flex;
  align-items: flex-start;
}
.namebox,
.fbtns,
.finput {
  height: 28px;
  box-sizing: border-box;
  background: #fff;
  border: 1px solid #c6c6c6;
  display: flex;
  align-items: center;
}
.namebox {
  width: 124px;
  justify-content: space-between;
  padding: 0 5px 0 6px;
  font-size: 14px;
}
.fdots {
  width: 30px;
  height: 28px;
  display: flex;
  align-items: center;
  justify-content: center;
}
.fbtns {
  width: 110px;
  padding-left: 13px;
  gap: 23px;
}
.fx {
  font-family: "Liberation Serif", serif;
  font-style: italic;
  font-size: 15px;
  color: #555;
  margin-left: -1px;
}
.finput {
  width: 1640px;
  margin-left: 4px;
  justify-content: space-between;
  padding: 0 4px 0 11px;
  font-size: 14px;
}

/* sheet */
.sheet-wrap {
  height: 786px;
  flex: none;
  display: flex;
  overflow: hidden;
}
.sheet {
  position: relative;
  width: 1897px;
  flex: none;
  overflow: hidden;
  background: #fff;
  border-right: 1px solid #9a9a9a;
  box-sizing: content-box;
  margin-right: -1px;
}
.srow {
  display: grid;
  grid-template-columns: 20px repeat(13, 86px) 135px 107px 119px repeat(4, 86px) 53px;
}
.head-row {
  height: 12px;
  background: #e6e6e6;
}
.h28 {
  height: 28px;
}
.corner {
  display: flex;
  align-items: flex-end;
  justify-content: flex-end;
  padding: 0 2px 1px 0;
  box-sizing: border-box;
  border-bottom: 1px solid #9a9a9a;
}
.chead {
  box-sizing: border-box;
  border-right: 1px solid #a8a8a8;
  border-bottom: 1px solid #9a9a9a;
  text-align: center;
  font-size: 10px;
  line-height: 11px;
  color: #333;
}
.chead.sel {
  background: #d2d2d2;
  color: #217346;
  border-bottom: 2px solid #217346;
  border-right-color: #9f9f9f;
}
.rhead {
  box-sizing: border-box;
  background: #e6e6e6;
  border-bottom: 1px solid #b0b0b0;
  border-right: 1px solid #9a9a9a;
  display: flex;
  align-items: flex-end;
  justify-content: center;
  font-size: 10px;
  line-height: 11px;
  padding-bottom: 1px;
  color: #333;
}
.rhead.sel {
  background: #d2d2d2;
  color: #217346;
}
.title-cell {
  grid-column: span 16;
  box-sizing: border-box;
  border-right: 1px solid #d4d4d4;
  display: flex;
  align-items: center;
  justify-content: center;
  font-size: 14.5px;
  color: #222;
}
.cell {
  box-sizing: border-box;
  border-right: 1px solid #d4d4d4;
  border-bottom: 1px solid #d4d4d4;
}
.cell.data {
  background: #c6c6c6;
  border-color: #a6a6a6;
  display: flex;
  align-items: center;
  justify-content: center;
  font-size: 14.5px;
  color: #222;
  white-space: nowrap;
}
.cell.data.active {
  background: #fff;
}
.selection {
  position: absolute;
  left: 19px;
  top: 39px;
  width: 1481px;
  height: 702px;
  box-sizing: border-box;
  border: 2px solid #217346;
  pointer-events: none;
}
.handle {
  position: absolute;
  right: -4px;
  bottom: -4px;
  width: 6px;
  height: 6px;
  background: #217346;
  border: 1px solid #fff;
  border-width: 1px 0 0 1px;
}
.cursor {
  position: absolute;
  left: 1016px;
  top: 325px;
}
.stamp {
  position: absolute;
  left: 1221px;
  top: 741px;
}

/* vertical scrollbar */
.vscroll {
  flex: 1;
  display: flex;
  flex-direction: column;
  padding: 3px 3px 0 3px;
  box-sizing: border-box;
  background: #e6e6e6;
}
.vbtn {
  height: 15px;
  flex: none;
  box-sizing: border-box;
  background: #fff;
  border: 1px solid #ababab;
  display: flex;
  align-items: center;
  justify-content: center;
}
.vbtn.up {
  background: #f1f1f1;
}
.vthumb {
  height: 197px;
  flex: none;
  background: #fff;
  border: 1px solid #ababab;
  border-top: 0;
  box-sizing: border-box;
}
.vtrack {
  height: 556px;
  flex: none;
  background: #e9e9e9;
}

/* sheet tabs */
.tabbar {
  height: 28px;
  flex: none;
  box-sizing: border-box;
  border-top: 1px solid #9a9a9a;
  background: #e6e6e6;
  display: flex;
  align-items: flex-start;
  border-bottom: 1px solid #d2d2d2;
}
.tabnav {
  width: 100px;
  height: 20px;
  margin-top: 2px;
  flex: none;
  box-sizing: border-box;
  border-right: 1px solid #9a9a9a;
  display: flex;
  align-items: center;
  gap: 26px;
  padding-left: 24px;
}
.nav-l,
.nav-r {
  width: 0;
  height: 0;
  border-top: 4px solid transparent;
  border-bottom: 4px solid transparent;
}
.nav-l {
  border-right: 5px solid #c4c4c4;
}
.nav-r {
  border-left: 5px solid #c4c4c4;
}
.nav-l.dark {
  border-right-color: #555;
}
.nav-r.dark {
  border-left-color: #555;
}
.stab {
  height: 22px;
  margin-top: 1px;
  padding-bottom: 2px;
  flex: none;
  box-sizing: border-box;
  display: flex;
  align-items: center;
  justify-content: center;
  font-size: 13px;
  color: #555;
  position: relative;
  white-space: nowrap;
}
.stab:not(.cur):not(.blue):not(.orange)::after {
  content: "";
  position: absolute;
  right: 0;
  top: 1px;
  bottom: 0;
  width: 1px;
  background: #9a9a9a;
}
.stab.cur {
  height: 24px;
  margin-top: 0;
  background: #fff;
  color: #217346;
  border-bottom: 2px solid #217346;
  border-left: 1px solid #9a9a9a;
  border-right: 1px solid #9a9a9a;
  padding-bottom: 1px;
}
.stab.blue {
  background: #bdd7ee;
  color: #111;
  margin-left: 2px;
}
.stab.orange {
  background: #f4b084;
  color: #222;
  margin-left: 5px;
  margin-right: 2px;
}
.addsheet {
  margin: 4px 0 0 32px;
  flex: none;
}
.hdots {
  margin: 7px 0 0 309px;
  flex: none;
}
.hscroll {
  margin: 6px 0 0 14px;
  width: 580px;
  height: 15px;
  flex: none;
  display: flex;
}
.hbtn {
  width: 15px;
  box-sizing: border-box;
  background: #fff;
  border: 1px solid #ababab;
  display: flex;
  align-items: center;
  justify-content: center;
}
.hthumb {
  width: 18px;
  box-sizing: border-box;
  background: #fff;
  border: 1px solid #ababab;
  border-left: 0;
}
.htrack {
  flex: 1;
  background: #d8d8d8;
  display: flex;
  align-items: center;
  justify-content: flex-end;
  padding-right: 6px;
}

/* status bar */
.statusbar {
  height: 22px;
  flex: none;
  box-sizing: border-box;
  background: #f0f0f0;
  display: flex;
  align-items: center;
  color: #555;
  white-space: nowrap;
}
.st-left,
.stat {
  position: relative;
  top: -1px;
}
.st-left {
  margin-left: 7px;
  margin-right: 12px;
}
.macro {
  margin-left: 5px;
}
.st-fill {
  flex: 1;
}
.stat {
  margin-right: 17px;
}
.views {
  display: flex;
  height: 22px;
  margin-left: 3px;
}
.vw {
  width: 38px;
  display: flex;
  align-items: center;
  justify-content: center;
}
.vw.on {
  background: #c6c6c6;
}
.zoomer {
  display: flex;
  align-items: center;
  margin-left: 4px;
  width: 187px;
  box-sizing: border-box;
  padding-right: 14px;
}
.zm {
  width: 14px;
  text-align: center;
  font-size: 16px;
  font-weight: 700;
}
.slider {
  flex: 1;
  height: 1px;
  background: #a8a8a8;
  position: relative;
}
.slider i {
  position: absolute;
  left: 35px;
  top: -6px;
  width: 3px;
  height: 13px;
  background: #444;
}
.zpct {
  margin-left: 7px;
}
.taskbar {
  flex: 1;
  background: #1b2b30;
  border-top: 1px solid #217346;
}

/* input method bar */
.ime {
  position: absolute;
  left: 903px;
  top: 1001px;
  display: flex;
  align-items: flex-start;
}
.ime-logo {
  position: relative;
  z-index: 1;
  width: 32px;
}
.ime-bar {
  height: 27px;
  margin-top: 5px;
  box-sizing: border-box;
  background: #fff;
  border: 1px solid #b9d3ee;
  display: flex;
  align-items: center;
  color: #0b6fde;
}
.ime-bar > span {
  width: 24px;
  display: flex;
  align-items: center;
  justify-content: center;
}
.ime-zh {
  font-size: 15px;
  font-weight: 700;
}
.ime-punc {
  font-size: 15px;
  font-weight: 700;
}

/* watermark */
.watermark {
  position: absolute;
  left: 1760px;
  top: 990px;
  display: flex;
  align-items: flex-start;
  gap: 1px;
  pointer-events: none;
}
.wm-text {
  display: flex;
  flex-direction: column;
}
.wm-cn {
  font-size: 21px;
  line-height: 24px;
  font-weight: 700;
  color: rgba(52, 136, 220, 0.85);
  white-space: nowrap;
}
.wm-url {
  font-size: 18px;
  line-height: 20px;
  margin-top: 1px;
  color: rgba(70, 180, 90, 0.75);
}
</style>
